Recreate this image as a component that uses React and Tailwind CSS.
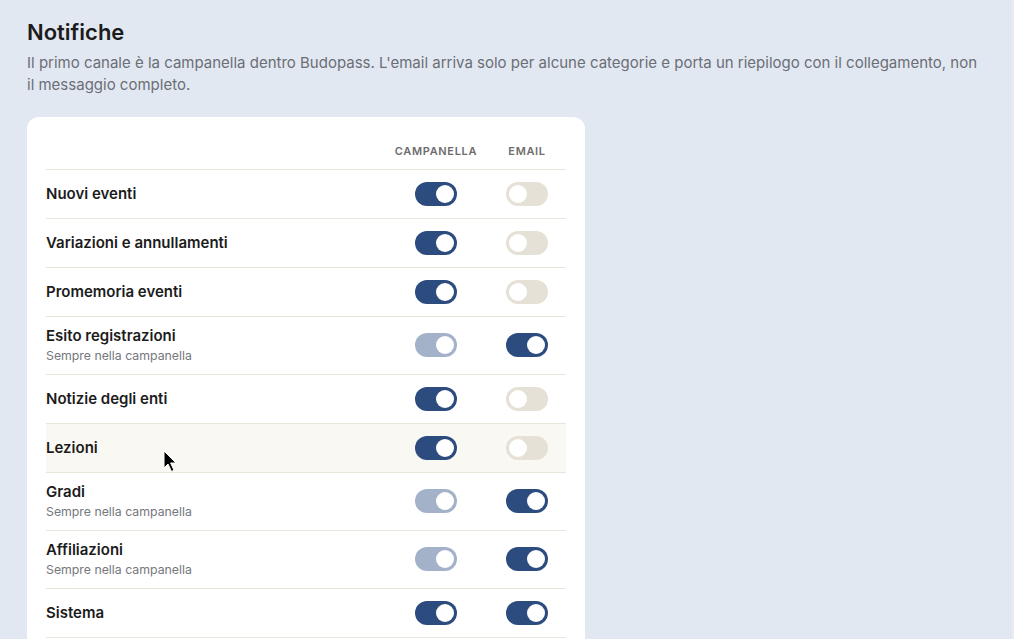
import { useState } from 'react'

const categories = [
  { id: 'events', label: 'Nuovi eventi', bell: true, email: false },
  { id: 'changes', label: 'Variazioni e annullamenti', bell: true, email: false },
  { id: 'reminders', label: 'Promemoria eventi', bell: true, email: false },
  { id: 'registrations', label: 'Esito registrazioni', locked: true, email: true },
  { id: 'news', label: 'Notizie degli enti', bell: true, email: false },
  { id: 'lessons', label: 'Lezioni', bell: true, email: false },
  { id: 'grades', label: 'Gradi', locked: true, email: true },
  { id: 'memberships', label: 'Affiliazioni', locked: true, email: true },
  { id: 'system', label: 'Sistema', bell: true, email: true },
]

function Toggle({ checked, disabled, onChange }) {
  const track = disabled
    ? 'bg-[#a4b2c9]'
    : checked
      ? 'bg-[#2c4b7e]'
      : 'bg-[#e5e1d6]'

  return (
    <button
      type="button"
      role="switch"
      aria-checked={checked}
      disabled={disabled}
      onClick={onChange}
      className={`relative flex h-6 w-[42px] items-center rounded-full px-[3px] ${track} ${checked ? 'justify-end' : 'justify-start'}`}
    >
      <span className="block h-[18px] w-[18px] rounded-full bg-white" />
    </button>
  )
}

function Cursor() {
  return (
    <svg
      className="pointer-events-none absolute left-[117px] top-[26px]"
      width="16"
      height="24"
      viewBox="0 0 16 24"
    >
      <path
        d="M1 1 L1 18 L5 14 L8.5 21.5 L11 20.3 L7.6 13 L13 13 Z"
        fill="#000"
        stroke="#fff"
        strokeWidth="1"
        strokeLinejoin="round"
      />
    </svg>
  )
}

export default function App() {
  const [prefs, setPrefs] = useState(categories)

  const flip = (id, key) => {
    setPrefs(prefs.map(p => (p.id === id ? { ...p, [key]: !p[key] } : p)))
  }

  return (
    <div className="min-h-[639px] bg-[#e2e8f2] px-[27px] pt-[18px] font-['Inter',sans-serif] border-r-2 border-[#e8ebf0]">
      <h1 className="text-[22px] font-semibold leading-7 text-[#1c1c1c]">Notifiche</h1>
      <p className="mt-[6px] max-w-[960px] text-[15px] leading-[22px] text-[#6b6e75]">
        Il primo canale è la campanella dentro Budopass. L'email arriva solo per alcune categorie e porta un riepilogo con il collegamento, non il messaggio completo.
      </p>

      <div className="mt-[21px] w-[558px] rounded-xl bg-white px-[19px] pt-5 pb-5">
        <div className="flex items-end border-b border-[#e9e5dc] pb-[9px] pt-[6px]">
          <div className="flex-1" />
          <div className="w-[104px] text-center text-[11px] font-semibold uppercase tracking-[0.06em] text-[#6d6d6d]">
            Campanella
          </div>
          <div className="w-[78px] text-center text-[11px] font-semibold uppercase tracking-[0.06em] text-[#6d6d6d]">
            Email
          </div>
        </div>

        {prefs.map(p => (
          <div
            key={p.id}
            className={`relative flex min-h-[49px] items-center border-b border-[#e9e5dc] py-[9px] ${p.id === 'lessons' ? 'bg-[#faf8f3]' : ''}`}
          >
            <div className="flex-1">
              <div className="text-[15px] font-semibold leading-5 text-[#1c1c1c]">{p.label}</div>
              {p.locked && (
                <div className="mt-[1px] text-[12.3px] leading-[18px] text-[#75777d]">Sempre nella campanella</div>
              )}
            </div>
            <div className="flex w-[104px] justify-center">
              <Toggle
                checked={p.locked ? true : p.bell}
                disabled={p.locked}
                onChange={() => flip(p.id, 'bell')}
              />
            </div>
            <div className="flex w-[78px] justify-center">
              <Toggle checked={p.email} onChange={() => flip(p.id, 'email')} />
            </div>
            {p.id === 'lessons' && <Cursor />}
          </div>
        ))}
      </div>
    </div>
  )
}
